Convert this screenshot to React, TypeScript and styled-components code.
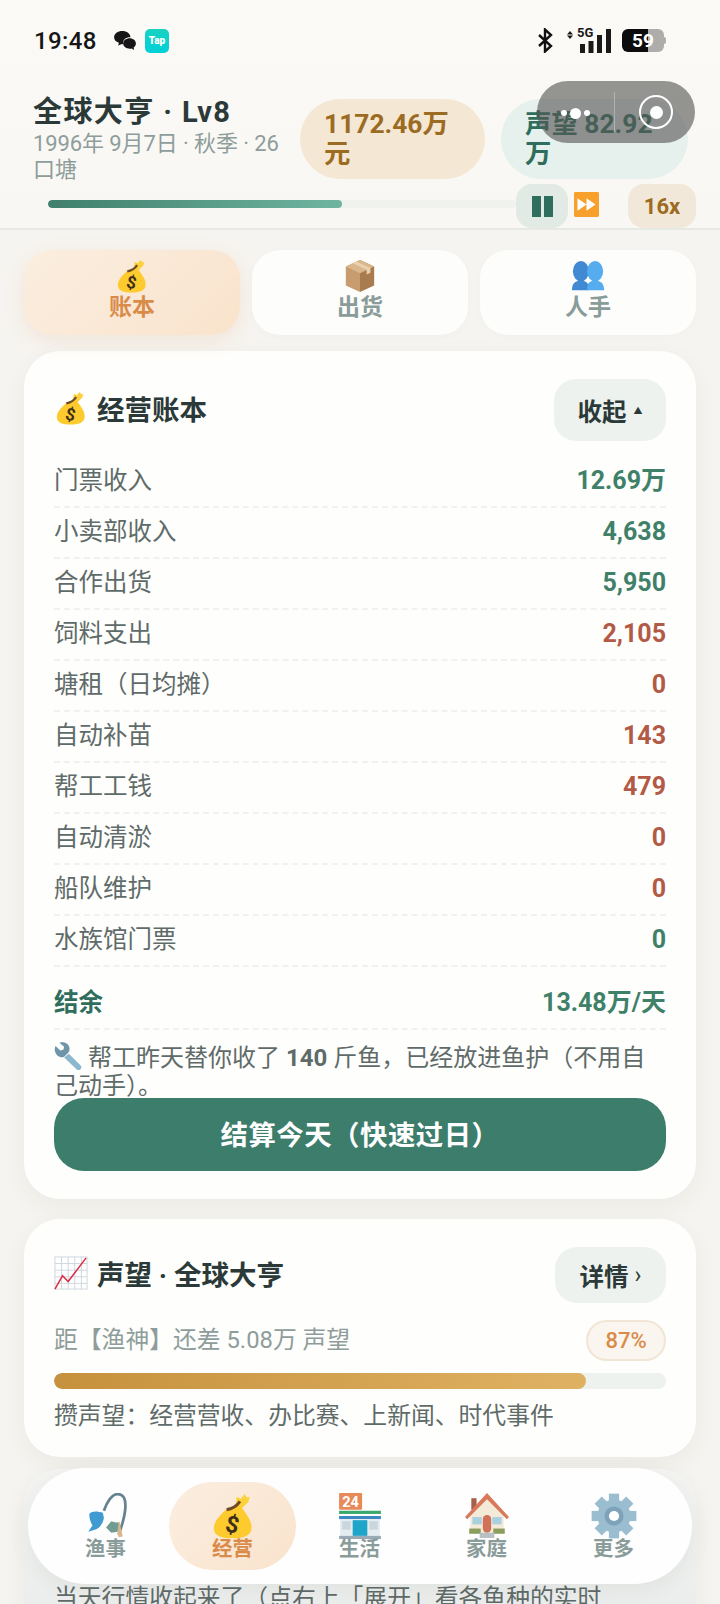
import React from "react";
import styled, { createGlobalStyle } from "styled-components";

const GlobalStyle = createGlobalStyle`
  html, body { margin: 0; padding: 0; background: #f6f4f0; }
  * { box-sizing: border-box; }
  body { font-family: Roboto, "Noto Sans CJK SC", sans-serif; }
`;

const MoneyBag = ({ size }: { size: number }) => (
  <svg width={size} height={size} viewBox="0 0 36 36">
    <path d="M21 3l3 1.500 3-3.500 2 2.500 2-.5-1 4-5 5-5-3z" fill="#fdd13c" />
    <path d="M14 12C9 16 3 22 3 27.500 3 33.500 9 35.500 18 35.500S32.500 33 32.500 27C32.500 20 27 15 23 9z" fill="#fdcb2e" />
    <path d="M13 13c4-.5 8-3 10.500-6.500" stroke="#6e4a28" strokeWidth="2.400" fill="none" />
    <text x="17.500" y="31" fontSize="18" fontWeight="700" fill="#3e2f1a" textAnchor="middle" transform="rotate(12 17.500 25)" fontFamily="Roboto">$</text>
  </svg>
);

const BoxIcon = ({ size }: { size: number }) => (
  <svg width={size} height={size} viewBox="0 0 36 36">
    <path d="M18 1l15 7v20l-15 7z" fill="#a97c50" />
    <path d="M18 1L3 8v20l15 7z" fill="#c89c6e" />
    <path d="M18 15L3 8l15-7 15 7z" fill="#d9b68c" />
    <path d="M10 4.500l15 7v5l4-2v-5L14 2.700z" fill="#e9d0ae" />
  </svg>
);

const PeopleIcon = ({ size }: { size: number }) => (
  <svg width={size} height={size} viewBox="0 0 36 36">
    <ellipse cx="10.500" cy="13" rx="8.500" ry="11" fill="#4289d4" />
    <path d="M1 33c0-7 3-10 9.500-10S19 26 19 33z" fill="#4289d4" />
    <ellipse cx="25.500" cy="13" rx="8.500" ry="11" fill="#55acee" />
    <path d="M17 33c0-7 2-10 8.500-10S35 26 35 33z" fill="#55acee" />
  </svg>
);

const WrenchIcon = ({ size }: { size: number }) => (
  <svg width={size} height={size} viewBox="0 0 36 36">
    <path d="M19 15l15 15a3.500 3.500 0 0 1-5 5L13 20z" fill="#8ab8cf" />
    <path d="M2 5l6 6 4-1 1-4-6-5c6-2 13 1 13 8 0 2-1 4-2 5l-5 5c-2 1-4 1-6 0C3 18-1 11 2 5z" fill="#6d94a8" />
  </svg>
);

const ChartIcon = ({ size }: { size: number }) => (
  <svg width={size} height={size} viewBox="0 0 36 36">
    <rect x="1" y="1" width="34" height="34" fill="#fff" stroke="#ccd6dd" strokeWidth="1" />
    <path d="M8 1v34M15 1v34M22 1v34M29 1v34M1 8h34M1 15h34M1 22h34M1 29h34" stroke="#ccd6dd" strokeWidth="1" />
    <path d="M1 35l8-14 6 6L34 2" stroke="#dd2e44" strokeWidth="1.600" fill="none" />
  </svg>
);

const FishingIcon = ({ size }: { size: number }) => (
  <svg width={size} height={size} viewBox="-3 0 44 44">
    <path d="M17 17C20 8 25 1 30 1c6 0 8 5 7.500 13C37 24 34 32 31 40" stroke="#64828f" strokeWidth="2.600" fill="none" />
    <path d="M33 42l-3-14" stroke="#d9b68c" strokeWidth="4" />
    <path d="M16 19c-5-2-11-2-13 1 0 5 2 9 3 11l-4 6 7-2c3-1 7-5 8-11z" fill="#3f9bd1" />
    <path d="M19 33l5-6 7 2-1 8-6 1z" fill="#6f9d92" />
  </svg>
);

const StoreIcon = ({ size }: { size: number }) => (
  <svg width={size} height={size} viewBox="0 0 44 44">
    <rect x="2" y="0" width="22" height="16" rx="1" fill="#e8895a" />
    <text x="13" y="13.500" fontSize="14" fontWeight="700" fill="#fff" textAnchor="middle" fontFamily="Roboto">24</text>
    <rect x="2" y="17" width="40" height="3" fill="#3aa76d" />
    <rect x="2" y="22" width="40" height="3" fill="#3b88c3" />
    <rect x="3" y="25" width="38" height="16" fill="#e4ecef" />
    <rect x="15" y="26" width="14" height="15" fill="#1ea5c9" />
    <rect x="5" y="27" width="8" height="8" fill="#c9d6db" />
    <rect x="31" y="27" width="8" height="8" fill="#c9d6db" />
    <rect x="2" y="41" width="40" height="3" fill="#99aab5" />
  </svg>
);

const HouseIcon = ({ size }: { size: number }) => (
  <svg width={size} height={size} viewBox="0 0 44 44">
    <rect x="7" y="5" width="5" height="11" fill="#a5604a" />
    <path d="M6 20L22 4l16 16v18H6z" fill="#f4ead8" />
    <path d="M1 23L22 0l21 23-2 2L22 6 3 25z" fill="#d9785a" />
    <rect x="8" y="23" width="9" height="7" fill="#a9d0df" />
    <rect x="27" y="23" width="9" height="7" fill="#a9d0df" />
    <rect x="18" y="21" width="8" height="17" rx="4" fill="#d0725a" />
    <rect x="5" y="34" width="11" height="5" fill="#8b9e5e" />
    <rect x="28" y="34" width="11" height="5" fill="#8b9e5e" />
    <rect x="15" y="38" width="14" height="5" fill="#b9c0c4" />
  </svg>
);

const GearIcon = ({ size }: { size: number }) => (
  <svg width={size} height={size} viewBox="0 0 36 36">
    <g fill="#9bbdd0">
      {[0, 45, 90, 135, 180, 225, 270, 315].map((a) => (
        <rect key={a} x="14" y="0.500" width="8" height="9" transform={`rotate(${a} 18 18)`} />
      ))}
      <circle cx="18" cy="18" r="13" />
    </g>
    <circle cx="18" cy="18" r="7.500" fill="#7ea3b8" />
    <circle cx="18" cy="18" r="4" fill="#fff" />
  </svg>
);

const FastForward = ({ size }: { size: number }) => (
  <svg width={size} height={size} viewBox="0 0 36 36">
    <rect x="0" y="0" width="36" height="36" rx="2" fill="#f8a02c" />
    <path d="M5 9l13 9-13 9zM18 9l13 9-13 9z" fill="#fff" />
  </svg>
);

const BluetoothIcon = () => (
  <svg width="16" height="25" viewBox="0 0 16 25">
    <path d="M2 7l12 11-6 5.500V1.500l6 5.500L2 18" stroke="#111" strokeWidth="2.400" fill="none" />
  </svg>
);

const SignalBars = () => (
  <svg width="44" height="25" viewBox="0 0 44 25">
    <path d="M3 3l3 3.500H0zM3 11L0 7.500h6z" fill="#1a1a1a" />
    <rect x="13" y="16" width="5" height="9" fill="#1a1a1a" />
    <rect x="21.500" y="13" width="5" height="12" fill="#1a1a1a" />
    <rect x="30" y="7" width="5" height="18" fill="#1a1a1a" />
    <rect x="39" y="1" width="5" height="24" fill="#1a1a1a" />
  </svg>
);

const WeChatIcon = () => (
  <svg width="22" height="20" viewBox="0 0 24 22">
    <path d="M9 0c5 0 9 3 9 7-4-.5-8 2-8 6 0 .5 0 1 .2 1.400L8 14.500 4.500 16l.8-3C2 12 0 10 0 7c0-4 4-7 9-7z" fill="#161616" />
    <path d="M17 8c4 0 7 2.600 7 5.800 0 1.800-1 3.300-2.500 4.400l.6 2.600-2.900-1.600c-3.800 1-9.200-1-9.200-5.400C10 10.600 13 8 17 8z" fill="#161616" />
  </svg>
);

const Page = styled.div`
  position: relative;
  width: 720px;
  height: 1604px;
  overflow: hidden;
  background: #f6f4f0;
`;

const Head = styled.header`
  height: 230px;
  background: linear-gradient(180deg, #fbfaf7, #f8f7f3);
  border-bottom: 2px solid #e6e9e4;
`;

const StatusBar = styled.div`
  height: 81px;
  padding: 28px 56px 0 34px;
  display: flex;
  justify-content: space-between;
  align-items: flex-start;
`;

const StatusGroup = styled.div`
  display: flex;
  align-items: center;
  height: 25px;
`;

const Clock = styled.span`
  font-size: 24px;
  font-weight: 500;
  color: #161616;
  margin-right: 17px;
  letter-spacing: 0.4px;
`;

const TapBadge = styled.span`
  width: 24px;
  height: 24px;
  margin-left: 9px;
  border-radius: 5px;
  background: linear-gradient(180deg, #17d3c2, #00d0d8);
  color: #fff;
  font-size: 10px;
  font-weight: 900;
  display: flex;
  align-items: center;
  justify-content: center;
`;

const Signal = styled.div`
  position: relative;
  margin-left: 14px;
  height: 25px;
`;

const NetworkLabel = styled.span`
  position: absolute;
  left: 10px;
  top: -2px;
  font-size: 13px;
  font-weight: 700;
  color: #1a1a1a;
  line-height: 14px;
  white-space: nowrap;
`;

const Battery = styled.div`
  position: relative;
  width: 42px;
  height: 23px;
  margin-left: 11px;
  border-radius: 6px;
  background: linear-gradient(90deg, #0c0c0c 62%, #adadab 62%);
  color: #fff;
  font-size: 19px;
  font-weight: 700;
  line-height: 23px;
  text-align: center;
  &::after {
    content: "";
    position: absolute;
    right: -2px;
    top: 8px;
    width: 2px;
    height: 7px;
    border-radius: 0 2px 2px 0;
    background: #adadab;
  }
`;

const HeadRow = styled.div`
  display: flex;
  align-items: flex-start;
  padding: 18px 32px 0 33px;
  gap: 16px;
  height: 98px;
`;

const TitleBlock = styled.div`
  width: 251px;
  flex: none;
  margin-top: -3px;
`;

const GameTitle = styled.div`
  font-size: 29px;
  line-height: 33px;
  font-weight: 700;
  color: #2b3a38;
  letter-spacing: 1.4px;
  white-space: nowrap;
`;

const GameMeta = styled.div`
  font-size: 22px;
  line-height: 26px;
  margin-top: 2px;
  letter-spacing: -0.1px;
  color: #8e9d9b;
`;

const StatPill = styled.div<{ $tone: "gold" | "teal"; $w: number }>`
  width: ${(p) => p.$w}px;
  height: 80px;
  flex: none;
  padding: 10px 24px;
  border-radius: 40px;
  font-size: 26.4px;
  line-height: 30px;
  font-weight: 700;
  background: ${(p) => (p.$tone === "gold" ? "#f4e7d3" : "#e6f0ec")};
  color: ${(p) => (p.$tone === "gold" ? "#9c6b22" : "#2f6e5c")};
`;

const ProgressRow = styled.div`
  display: flex;
  align-items: center;
  padding: 5px 24px 0 48px;
`;

const XpTrack = styled.div`
  width: 468px;
  height: 8px;
  margin-top: -4px;
  border-radius: 4px;
  background: #f0f2ee;
  overflow: hidden;
`;

const XpFill = styled.div`
  width: 294px;
  height: 100%;
  border-radius: 4px;
  background: linear-gradient(90deg, #3f7f6c, #6fb5a0);
`;

const SpeedButton = styled.div<{ $tone: "teal" | "gold"; $w: number }>`
  width: ${(p) => p.$w}px;
  height: 44px;
  flex: none;
  border-radius: 16px;
  display: flex;
  align-items: center;
  justify-content: center;
  font-size: 22px;
  font-weight: 700;
  background: ${(p) => (p.$tone === "teal" ? "#e2eae6" : "#f1e8d9")};
  color: #9c6b22;
`;

const PauseBar = styled.span`
  width: 9px;
  height: 21px;
  margin: 0 1.5px;
  background: #2f6e5c;
`;

const FfSlot = styled.div`
  flex: none;
  width: 60px;
  padding-left: 6px;
  display: flex;
  margin-top: -4px;
`;

const Capsule = styled.div`
  position: absolute;
  left: 537px;
  top: 81px;
  width: 158px;
  height: 62px;
  border-radius: 31px;
  background: rgba(86, 86, 84, 0.62);
  display: flex;
  align-items: center;
`;

const CapsuleDots = styled.div`
  width: 78px;
  display: flex;
  align-items: center;
  justify-content: center;
  gap: 3px;
  padding-top: 2px;
  border-right: 1px solid rgba(255, 255, 255, 0.3);
  height: 40px;
`;

const CapsuleDot = styled.span<{ $big?: boolean }>`
  width: ${(p) => (p.$big ? 11 : 6)}px;
  height: ${(p) => (p.$big ? 11 : 6)}px;
  border-radius: 50%;
  background: #fff;
`;

const CapsuleRing = styled.div`
  width: 34px;
  height: 34px;
  margin-left: 24px;
  border-radius: 50%;
  border: 2.5px solid #fff;
  display: flex;
  align-items: center;
  justify-content: center;
  &::after {
    content: "";
    width: 13px;
    height: 13px;
    border-radius: 50%;
    background: #fff;
  }
`;

const Tabs = styled.nav`
  display: grid;
  grid-template-columns: repeat(3, 216px);
  gap: 12px;
  padding: 20px 24px 0 24px;
`;

const Tab = styled.div<{ $on?: boolean }>`
  height: 85px;
  border-radius: 28px;
  display: flex;
  flex-direction: column;
  align-items: center;
  gap: 2px;
  padding-top: 9px;
  font-size: 23px;
  line-height: 26px;
  font-weight: 700;
  background: ${(p) => (p.$on ? "linear-gradient(135deg, #fbeee0, #f9e3cc)" : "#fdfdfb")};
  color: ${(p) => (p.$on ? "#d98c4a" : "#8a9c9a")};
  box-shadow: ${(p) => (p.$on ? "0 6px 20px rgba(217, 140, 74, 0.14)" : "0 2px 10px rgba(60, 60, 40, 0.02)")};
`;

const Card = styled.section`
  margin: 16px 24px 0;
  padding: 28px 30px 0;
  border-radius: 36px;
  background: #fefefc;
  box-shadow: 0 8px 24px rgba(60, 60, 40, 0.05);
`;

const LedgerCard = styled(Card)`
  height: 848px;
`;

const RenownCard = styled(Card)`
  margin-top: 20px;
  height: 238px;
`;

const MarketCard = styled(Card)`
  margin-top: 12px;
  height: 300px;
  background: linear-gradient(180deg, #f4f5f3, #e2e6e6);
  padding-top: 113px;
  font-size: 23.8px;
  line-height: 32px;
  color: #5f6b69;
`;

const CardHead = styled.div`
  display: flex;
  align-items: center;
  justify-content: space-between;
`;

const CardTitle = styled.h2`
  margin: 0;
  padding-bottom: 4px;
  display: flex;
  align-items: center;
  gap: 9px;
  font-size: 27.5px;
  font-weight: 700;
  color: #2b3a38;
`;

const GhostButton = styled.div<{ $h: number; $w: number }>`
  width: ${(p) => p.$w}px;
  height: ${(p) => p.$h}px;
  border-radius: 22px;
  background: #eef2ef;
  display: flex;
  align-items: center;
  justify-content: center;
  gap: 7px;
  font-size: 24.5px;
  font-weight: 700;
  color: #2b3a38;
`;

const Caret = styled.span`
  font-size: 9px;
  font-weight: 400;
`;

const Chevron = styled.span`
  font-size: 23px;
  font-weight: 400;
  margin-left: -1px;
`;

const Ledger = styled.div`
  margin-top: 16px;
`;

const Row = styled.div<{ $total?: boolean }>`
  height: ${(p) => (p.$total ? 63 : 51)}px;
  padding: ${(p) => (p.$total ? "10px 0 0" : "0 0 2px")};
  display: flex;
  align-items: center;
  justify-content: space-between;
  border-bottom: 2px dashed #f0f2ef;
  font-size: 24.5px;
  line-height: 30px;
  color: ${(p) => (p.$total ? "#2f6e5c" : "#5f6b69")};
  font-weight: ${(p) => (p.$total ? 700 : 400)};
`;

const Amount = styled.span<{ $bad?: boolean }>`
  font-size: 25px;
  font-weight: 700;
  color: ${(p) => (p.$bad ? "#b25a46" : "#3f8069")};
`;

const Note = styled.p`
  margin: 12px 0 0;
  height: 53px;
  font-size: 24px;
  line-height: 28px;
  color: #5f6b69;
  strong {
    font-weight: 700;
  }
  svg {
    vertical-align: -4px;
    margin-right: 6px;
  }
`;

const SettleButton = styled.div`
  height: 73px;
  margin-top: 3px;
  padding-bottom: 3px;
  border-radius: 30px;
  background: #3d7d6b;
  color: #fff;
  display: flex;
  align-items: center;
  justify-content: center;
  font-size: 27.4px;
  font-weight: 700;
  letter-spacing: 0.5px;
`;

const RankRow = styled.div`
  display: flex;
  align-items: center;
  justify-content: space-between;
  margin-top: 17px;
  font-size: 23.8px;
  line-height: 41px;
  color: #8e9d9b;
`;

const RankBadge = styled.span`
  width: 80px;
  height: 41px;
  border-radius: 21px;
  border: 2px solid #f1e5d5;
  background: #faf5ee;
  color: #d98c4a;
  font-size: 22px;
  font-weight: 500;
  display: flex;
  align-items: center;
  justify-content: center;
`;

const RankTrack = styled.div`
  height: 16px;
  margin-top: 12px;
  border-radius: 8px;
  background: #eef2ef;
  overflow: hidden;
`;

const RankFill = styled.div`
  height: 100%;
  border-radius: 8px;
  background: linear-gradient(90deg, #c6913d, #dfb263);
`;

const RankHint = styled.div`
  margin-top: 12px;
  font-size: 23.8px;
  line-height: 30px;
  color: #5f6b69;
`;

const BottomNav = styled.nav`
  position: absolute;
  left: 28px;
  top: 1468px;
  width: 664px;
  height: 116px;
  padding: 14px 0 0 14px;
  border-radius: 58px;
  background: #fefefe;
  box-shadow: 0 6px 22px rgba(60, 60, 40, 0.07);
  display: grid;
  grid-template-columns: repeat(5, 127px);
`;

const NavItem = styled.div<{ $on?: boolean }>`
  height: 88px;
  border-radius: 44px;
  display: flex;
  flex-direction: column;
  align-items: center;
  justify-content: flex-end;
  padding-bottom: 9px;
  font-size: 20.4px;
  line-height: 24px;
  font-weight: 700;
  background: ${(p) => (p.$on ? "linear-gradient(135deg, #fbeee0, #f9e3cc)" : "transparent")};
  color: ${(p) => (p.$on ? "#d98c4a" : "#8a9c9a")};
  svg {
    margin-bottom: -2px;
  }
`;

const ledgerRows = [
  { label: "门票收入", value: "12.69万" },
  { label: "小卖部收入", value: "4,638" },
  { label: "合作出货", value: "5,950" },
  { label: "饲料支出", value: "2,105", bad: true },
  { label: "塘租（日均摊）", value: "0", bad: true },
  { label: "自动补苗", value: "143", bad: true },
  { label: "帮工工钱", value: "479", bad: true },
  { label: "自动清淤", value: "0", bad: true },
  { label: "船队维护", value: "0", bad: true },
  { label: "水族馆门票", value: "0" },
];

const navItems = [
  { label: "渔事", icon: <FishingIcon size={46} /> },
  { label: "经营", icon: <MoneyBag size={46} />, on: true },
  { label: "生活", icon: <StoreIcon size={46} /> },
  { label: "家庭", icon: <HouseIcon size={46} /> },
  { label: "更多", icon: <GearIcon size={46} /> },
];

export default function App() {
  return (
    <Page>
      <GlobalStyle />
      <Head>
        <StatusBar>
          <StatusGroup>
            <Clock>19:48</Clock>
            <WeChatIcon />
            <TapBadge>Tap</TapBadge>
          </StatusGroup>
          <StatusGroup>
            <BluetoothIcon />
            <Signal>
              <SignalBars />
              <NetworkLabel>5G</NetworkLabel>
            </Signal>
            <Battery>59</Battery>
          </StatusGroup>
        </StatusBar>
        <HeadRow>
          <TitleBlock>
            <GameTitle>全球大亨 · Lv8</GameTitle>
            <GameMeta>1996年 9月7日 · 秋季 · 26 口塘</GameMeta>
          </TitleBlock>
          <StatPill $tone="gold" $w={185}>1172.46万元</StatPill>
          <StatPill $tone="teal" $w={187}>声望 82.92万</StatPill>
        </HeadRow>
        <ProgressRow>
          <XpTrack>
            <XpFill />
          </XpTrack>
          <SpeedButton $tone="teal" $w={52}>
            <PauseBar />
            <PauseBar />
          </SpeedButton>
          <FfSlot>
            <FastForward size={25} />
          </FfSlot>
          <SpeedButton $tone="gold" $w={68}>16x</SpeedButton>
        </ProgressRow>
      </Head>
      <Capsule>
        <CapsuleDots>
          <CapsuleDot />
          <CapsuleDot $big />
          <CapsuleDot />
        </CapsuleDots>
        <CapsuleRing />
      </Capsule>
      <Tabs>
        <Tab $on>
          <MoneyBag size={34} />
          账本
        </Tab>
        <Tab>
          <BoxIcon size={34} />
          出货
        </Tab>
        <Tab>
          <PeopleIcon size={34} />
          人手
        </Tab>
      </Tabs>
      <LedgerCard>
        <CardHead>
          <CardTitle>
            <MoneyBag size={34} />
            经营账本
          </CardTitle>
          <GhostButton $w={112} $h={62}>
            收起<Caret>▲</Caret>
          </GhostButton>
        </CardHead>
        <Ledger>
          {ledgerRows.map((r) => (
            <Row key={r.label}>
              {r.label}
              <Amount $bad={r.bad}>{r.value}</Amount>
            </Row>
          ))}
          <Row $total>
            结余
            <Amount>13.48万/天</Amount>
          </Row>
        </Ledger>
        <Note>
          <WrenchIcon size={28} />
          帮工昨天替你收了 <strong>140</strong> 斤鱼，已经放进鱼护（不用自己动手）。
        </Note>
        <SettleButton>结算今天（快速过日）</SettleButton>
      </LedgerCard>
      <RenownCard>
        <CardHead>
          <CardTitle>
            <ChartIcon size={34} />
            声望 · 全球大亨
          </CardTitle>
          <GhostButton $w={111} $h={56}>
            详情<Chevron>›</Chevron>
          </GhostButton>
        </CardHead>
        <RankRow>
          距【渔神】还差 5.08万 声望
          <RankBadge>87%</RankBadge>
        </RankRow>
        <RankTrack>
          <RankFill style={{ width: "87%" }} />
        </RankTrack>
        <RankHint>攒声望：经营营收、办比赛、上新闻、时代事件</RankHint>
      </RenownCard>
      <MarketCard>
        当天行情收起来了（点右上「展开」看各鱼种的实时
        <br />
        行情）
      </MarketCard>
      <BottomNav>
        {navItems.map((n) => (
          <NavItem key={n.label} $on={n.on}>
            {n.icon}
            {n.label}
          </NavItem>
        ))}
      </BottomNav>
    </Page>
  );
}
